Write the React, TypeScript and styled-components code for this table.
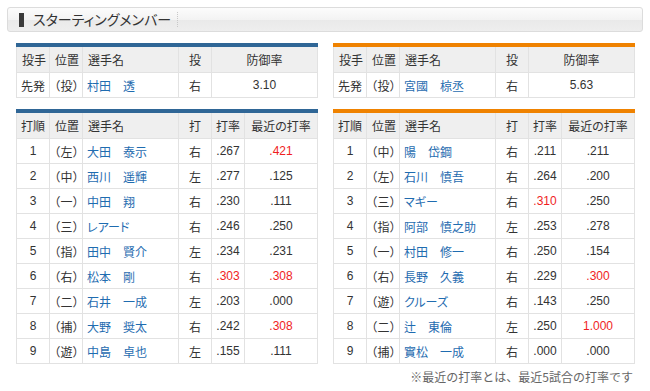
import styled, { createGlobalStyle } from "styled-components";

const GlobalStyle = createGlobalStyle`
  html, body {
    margin: 0;
    padding: 0;
    background: #fff;
  }
  body {
    font-family: "Liberation Sans", "Noto Sans CJK JP", sans-serif;
    color: #333;
  }
`;

type Team = "home" | "away";

const teamColor: Record<Team, string> = {
  home: "#2f6696",
  away: "#ef8200",
};

const Page = styled.div`
  width: 650px;
  height: 391px;
  padding-top: 7px;
  box-sizing: border-box;
`;

const TitleBar = styled.div`
  margin: 0 7px;
  height: 23px;
  border: 1px solid #dcdcdc;
  border-radius: 3px;
  background: linear-gradient(#fcfcfc 0%, #f3f3f3 50%, #e9e9e9 51%, #eeeeee 100%);
  display: flex;
  align-items: center;
  padding-left: 11px;
`;

const TitleMark = styled.span`
  width: 5px;
  height: 14px;
  background: #3a3a3a;
  margin-right: 9px;
`;

const Title = styled.h2`
  margin: 0;
  font-family: "Noto Sans CJK JP", sans-serif;
  font-feature-settings: "palt";
  font-weight: normal;
  font-size: 14px;
  color: #333;
  padding-right: 6px;
  border-right: 1px dotted #c8c8c8;
  line-height: 15px;
`;

const Columns = styled.div`
  display: grid;
  grid-template-columns: 1fr 1fr;
  column-gap: 15px;
  padding: 0 15px 0 16px;
`;

const Column = styled.div`
  display: flex;
  flex-direction: column;
  gap: 11px;
  padding-top: 11px;
`;

const TableWrap = styled.div<{ $team: Team }>`
  border-top: 4px solid ${(p) => teamColor[p.$team]};
`;

const Table = styled.table`
  width: 100%;
  border-collapse: separate;
  border-spacing: 0;
  table-layout: fixed;
  border-left: 1px solid #e2e2e2;
  font-family: "Noto Sans CJK JP", sans-serif;
  font-feature-settings: "palt";
  font-size: 12px;
`;

const Th = styled.th<{ $align?: "left" | "center" }>`
  height: 26px;
  box-sizing: border-box;
  padding: 0 0 0 ${(p) => (p.$align === "left" ? "5px" : "0")};
  background: #efefef;
  font-weight: normal;
  color: #333;
  text-align: ${(p) => p.$align ?? "center"};
  border-right: 1px solid #e2e2e2;
  border-bottom: 1px solid #e2e2e2;
  white-space: nowrap;
  overflow: hidden;
`;

const Td = styled.td<{ $align?: "left" | "center"; $num?: boolean; $hot?: boolean }>`
  height: 25px;
  box-sizing: border-box;
  padding: 0 0 0 ${(p) => (p.$align === "left" ? "4px" : "0")};
  text-align: ${(p) => p.$align ?? "center"};
  color: ${(p) => (p.$hot ? "#f01e1e" : "#333")};
  font-family: ${(p) =>
    p.$num ? '"Liberation Sans", sans-serif' : '"Noto Sans CJK JP", sans-serif'};
  border-right: 1px solid #e2e2e2;
  border-bottom: 1px solid #e2e2e2;
  white-space: nowrap;
  overflow: hidden;
`;

const Pos = styled.span`
  letter-spacing: 0.5px;
`;

const NameLink = styled.a`
  color: #1f6cb0;
  text-decoration: none;
`;

const Note = styled.p`
  margin: 4px 17px 0 0;
  text-align: right;
  font-family: "Noto Sans CJK JP", sans-serif;
  font-size: 12px;
  color: #666;
`;

type Pitcher = { name: string; hand: string; era: string };
type Batter = {
  order: number;
  pos: string;
  name: string;
  hand: string;
  avg: string;
  recent: string;
};

const pitchers: Record<Team, Pitcher> = {
  home: { name: "村田　透", hand: "右", era: "3.10" },
  away: { name: "宮國　椋丞", hand: "右", era: "5.63" },
};

const batters: Record<Team, Batter[]> = {
  home: [
    { order: 1, pos: "左", name: "大田　泰示", hand: "右", avg: ".267", recent: ".421" },
    { order: 2, pos: "中", name: "西川　遥輝", hand: "左", avg: ".277", recent: ".125" },
    { order: 3, pos: "一", name: "中田　翔", hand: "右", avg: ".230", recent: ".111" },
    { order: 4, pos: "三", name: "レアード", hand: "右", avg: ".246", recent: ".250" },
    { order: 5, pos: "指", name: "田中　賢介", hand: "左", avg: ".234", recent: ".231" },
    { order: 6, pos: "右", name: "松本　剛", hand: "右", avg: ".303", recent: ".308" },
    { order: 7, pos: "二", name: "石井　一成", hand: "左", avg: ".203", recent: ".000" },
    { order: 8, pos: "捕", name: "大野　奨太", hand: "右", avg: ".242", recent: ".308" },
    { order: 9, pos: "遊", name: "中島　卓也", hand: "左", avg: ".155", recent: ".111" },
  ],
  away: [
    { order: 1, pos: "中", name: "陽　岱鋼", hand: "右", avg: ".211", recent: ".211" },
    { order: 2, pos: "左", name: "石川　慎吾", hand: "右", avg: ".264", recent: ".200" },
    { order: 3, pos: "三", name: "マギー", hand: "右", avg: ".310", recent: ".250" },
    { order: 4, pos: "指", name: "阿部　慎之助", hand: "左", avg: ".253", recent: ".278" },
    { order: 5, pos: "一", name: "村田　修一", hand: "右", avg: ".250", recent: ".154" },
    { order: 6, pos: "右", name: "長野　久義", hand: "右", avg: ".229", recent: ".300" },
    { order: 7, pos: "遊", name: "クルーズ", hand: "右", avg: ".143", recent: ".250" },
    { order: 8, pos: "二", name: "辻　東倫", hand: "左", avg: ".250", recent: "1.000" },
    { order: 9, pos: "捕", name: "實松　一成", hand: "右", avg: ".000", recent: ".000" },
  ],
};

// .300 and up is shown in red
const isHot = (v: string) => parseFloat(v) >= 0.3;

const Cols = () => (
  <colgroup>
    <col style={{ width: 33 }} />
    <col style={{ width: 33 }} />
    <col style={{ width: 96 }} />
    <col style={{ width: 33 }} />
    <col style={{ width: 33 }} />
    <col />
  </colgroup>
);

const PitcherTable = ({ team }: { team: Team }) => {
  const p = pitchers[team];
  return (
    <TableWrap $team={team}>
      <Table>
        <colgroup>
          <col style={{ width: 33 }} />
          <col style={{ width: 33 }} />
          <col style={{ width: 96 }} />
          <col style={{ width: 33 }} />
          <col />
        </colgroup>
        <thead>
          <tr>
            <Th $align="left">投手</Th>
            <Th $align="left">位置</Th>
            <Th $align="left">選手名</Th>
            <Th>投</Th>
            <Th>防御率</Th>
          </tr>
        </thead>
        <tbody>
          <tr>
            <Td $align="left">先発</Td>
            <Td $align="left">
              <Pos>（投）</Pos>
            </Td>
            <Td $align="left">
              <NameLink href="#">{p.name}</NameLink>
            </Td>
            <Td>{p.hand}</Td>
            <Td $num>{p.era}</Td>
          </tr>
        </tbody>
      </Table>
    </TableWrap>
  );
};

const BatterTable = ({ team }: { team: Team }) => (
  <TableWrap $team={team}>
    <Table>
      <Cols />
      <thead>
        <tr>
          <Th>打順</Th>
          <Th $align="left">位置</Th>
          <Th $align="left">選手名</Th>
          <Th>打</Th>
          <Th>打率</Th>
          <Th>最近の打率</Th>
        </tr>
      </thead>
      <tbody>
        {batters[team].map((b) => (
          <tr key={b.order}>
            <Td $num>{b.order}</Td>
            <Td $align="left">
              <Pos>（{b.pos}）</Pos>
            </Td>
            <Td $align="left">
              <NameLink href="#">{b.name}</NameLink>
            </Td>
            <Td>{b.hand}</Td>
            <Td $num $hot={isHot(b.avg)}>
              {b.avg}
            </Td>
            <Td $num $hot={isHot(b.recent)}>
              {b.recent}
            </Td>
          </tr>
        ))}
      </tbody>
    </Table>
  </TableWrap>
);

const App = () => (
  <Page>
    <GlobalStyle />
    <TitleBar>
      <TitleMark />
      <Title>スターティングメンバー</Title>
    </TitleBar>
    <Columns>
      <Column>
        <PitcherTable team="home" />
        <BatterTable team="home" />
      </Column>
      <Column>
        <PitcherTable team="away" />
        <BatterTable team="away" />
      </Column>
    </Columns>
    <Note>※最近の打率とは、最近5試合の打率です</Note>
  </Page>
);

export default App;
